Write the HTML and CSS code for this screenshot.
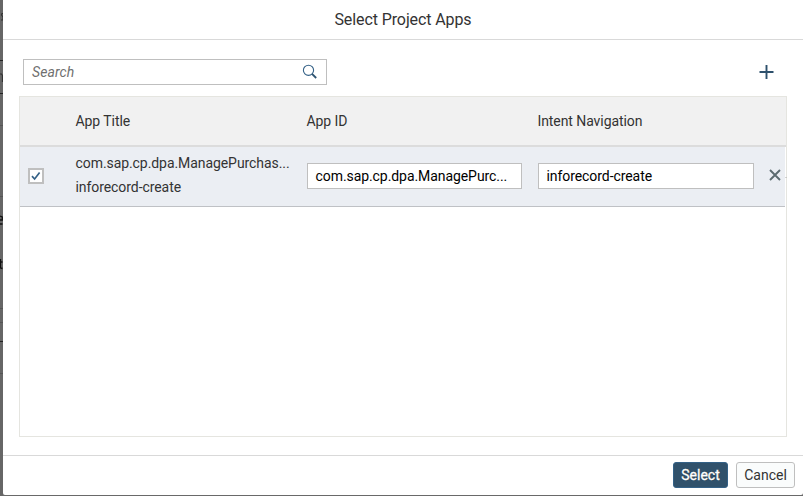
FILE: index.html
```
<!DOCTYPE html>
<html lang="en">
<head>
<meta charset="utf-8">
<title>Select Project Apps</title>
<link rel="stylesheet" href="styles.css">
</head>
<body>
<svg class="backdrop" width="3" height="496" aria-hidden="true">
  <g fill="#222"><rect y="60" width="3" height="1"/><rect y="93" width="3" height="1"/><rect y="341" width="3" height="1"/></g>
  <g fill="#555"><rect y="125" width="3" height="1"/><rect y="196" width="3" height="1"/><rect y="308" width="3" height="1"/><rect y="322" width="3" height="1"/><rect y="373" width="3" height="1"/></g>
  <g fill="none" stroke="#333" stroke-width="1.2"><path d="M3 13.5H2L1.500 15l1.500 2v3H1"/><path d="M0 74h1.500l1 1.500V82"/></g>
  <g fill="none" stroke="#111" stroke-width="1.300"><path d="M0 216l2.300 1v3H0M0 224h2.500"/><path d="M.5 259v9l2 .5M0 262h2.500"/></g>
</svg>
<main class="dialog">
  <header class="title">Select Project Apps</header>
  <section class="content">
    <div class="toolbar">
      <div class="search"><span>Search</span>
        <svg width="16" height="16" viewBox="0 0 16 16" fill="none" stroke="#346187"><circle cx="6.500" cy="6.300" r="5.100" stroke-width="1.100"/><path d="M10 9.800l4.200 4.200" stroke="#2d5370" stroke-width="1.800"/></svg>
      </div>
      <svg class="add" width="15" height="14" viewBox="0 0 15 14" fill="none" stroke="#2d506c" stroke-width="1.900"><path d="M.5 7h14M7.500 0v14"/></svg>
    </div>
    <div class="table">
      <div class="row head"><span></span><span>App Title</span><span>App ID</span><span>Intent Navigation</span></div>
      <div class="row item">
        <span class="check"><svg width="12" height="12" viewBox="0 0 12 12" fill="none" stroke="#346187" stroke-width="1.700"><path d="M2 6.200l2.600 2.800L9.600 2.500"/></svg></span>
        <div class="app"><div>com.sap.cp.dpa.ManagePurchas...</div><div>inforecord-create</div></div>
        <div class="field">com.sap.cp.dpa.ManagePurc...</div>
        <div class="field">inforecord-create</div>
        <svg class="remove" width="12" height="12" viewBox="0 0 12 12" fill="none" stroke="#5c6b70" stroke-width="1.900"><path d="M1 1l10 10M11 1L1 11"/><path d="M16.500 8.500h1" stroke="#aaa" stroke-width="1"/></svg>
      </div>
    </div>
  </section>
  <footer class="footer"><div class="button primary">Select</div><div class="button">Cancel</div></footer>
</main>
</body>
</html>
```
FILE: styles.css
```
* { box-sizing: border-box; }
body { margin: 0; width: 803px; height: 496px; display: flex; overflow: hidden; background: #696969; font: 14px/20px Roboto, "Liberation Sans", sans-serif; color: #333; white-space: nowrap; }
.backdrop { flex: none; background: #666; }
.dialog { flex: 1; min-width: 0; height: 495px; display: flex; flex-direction: column; background: #fff; border-radius: 0 0 2px 2px; }
.title { height: 40px; border-bottom: 1px solid #d9d9d9; text-align: center; font-size: 16px; line-height: 39px; letter-spacing: -.1px; }
.content { flex: 1; padding: 19px 16px 18px; display: flex; flex-direction: column; }
.toolbar { display: flex; justify-content: space-between; align-items: center; height: 26px; padding: 0 13px 0 4px; margin-bottom: 11px; }
.search { width: 304px; height: 26px; border: 1px solid #bfbfbf; display: flex; align-items: center; justify-content: space-between; padding: 0 8px; color: #707070; font-style: italic; letter-spacing: .1px; }
.table { flex: 1; border: 1px solid #e5e5e0; }
.row { display: grid; grid-template-columns: 40px 215px 215px 216px 12px; column-gap: 16px; align-items: center; letter-spacing: -.07px; }
.row > :nth-child(2) { margin-left: -.5px; }
.head { height: 50px; background: #f1f1f1; border-bottom: 2px solid #dcdcdc; }
.head > :nth-child(n+3) { margin-left: -.6px; }
.item { width: 765px; height: 60px; padding-bottom: 2px; background: #ebeef3; border-bottom: 1px solid #bfc1c5; }
.check { width: 16px; height: 16px; margin-left: 8px; border: 2px solid #bfbfbf; background: #fff; display: flex; }
.app { line-height: 24px; padding-bottom: 2px; }
.field { height: 26px; border: 1px solid #bfbfbf; background: #fff; color: #000; padding: 0 7.5px; line-height: 24px; }
.remove { margin: 0 0 2px -1px; overflow: visible; }
.footer { height: 40px; border-top: 1px solid #d9d9d9; display: flex; justify-content: flex-end; gap: 8px; padding: 6px 8px; }
.button { width: 59px; height: 26px; border: 1px solid #bfbfbf; border-radius: 3px; background: #fafcfc; text-align: center; line-height: 24px; }
.primary { width: 55px; background: #30516b; border-color: #346187; color: #fff; text-shadow: 0 0 1px #000; -webkit-text-stroke: .4px #fff; }
```
